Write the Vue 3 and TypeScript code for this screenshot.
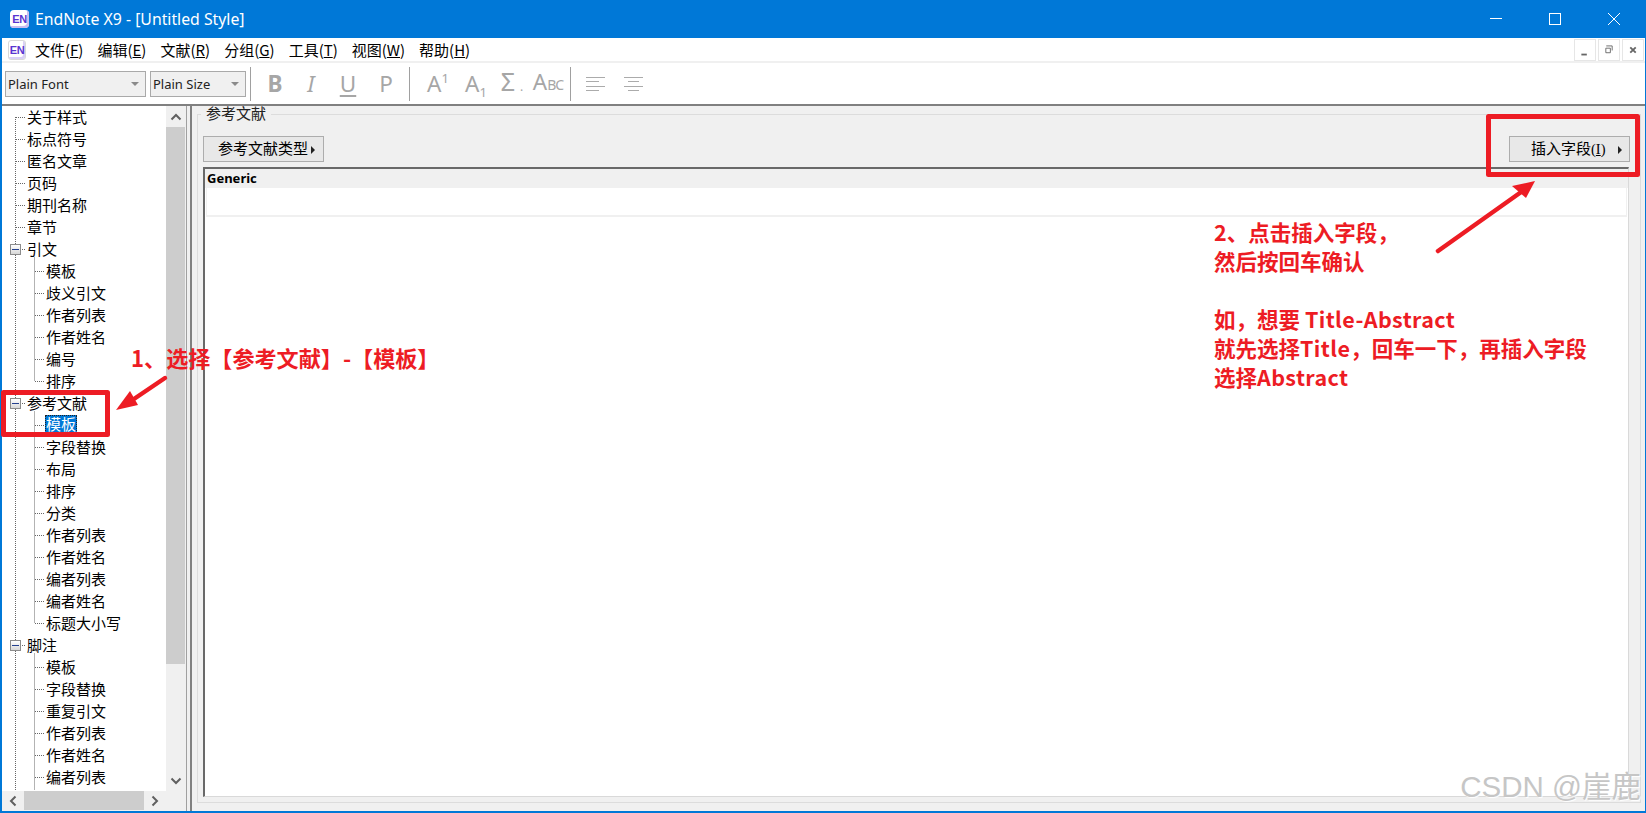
<script setup lang="ts">
interface Row { label: string; level: 0 | 1; box?: boolean; selected?: boolean }

const ROW_H = 22
const groups: Array<string | [string, string[]]> = [
  '关于样式', '标点符号', '匿名文章', '页码', '期刊名称', '章节',
  ['引文', ['模板', '歧义引文', '作者列表', '作者姓名', '编号', '排序']],
  ['参考文献', ['模板', '字段替换', '布局', '排序', '分类', '作者列表', '作者姓名', '编者列表', '编者姓名', '标题大小写']],
  ['脚注', ['模板', '字段替换', '重复引文', '作者列表', '作者姓名', '编者列表']],
]

const rows: Row[] = []
for (const g of groups) {
  if (typeof g === 'string') {
    rows.push({ label: g, level: 0 })
  } else {
    rows.push({ label: g[0], level: 0, box: true })
    g[1].forEach((c, i) => rows.push({ label: c, level: 1, selected: g[0] === '参考文献' && i === 0 }))
  }
}

const cy = (i: number): number => i * ROW_H + 11.5

interface Seg { x1: number; y1: number; x2: number; y2: number }
const segs: Seg[] = []
segs.push({ x1: 15.5, y1: 11, x2: 15.5, y2: 700 })
rows.forEach((r, i) => {
  if (r.level === 0) {
    segs.push({ x1: 16, y1: cy(i), x2: 26, y2: cy(i) })
    if (r.box) {
      let j = i + 1
      while (j < rows.length && rows[j].level === 1) j++
      const endY = j < rows.length ? cy(j - 1) : 700
      segs.push({ x1: 34.5, y1: cy(i) + 8, x2: 34.5, y2: endY })
    }
  } else {
    segs.push({ x1: 35, y1: cy(i), x2: 45, y2: cy(i) })
  }
})

const boxes = rows.map((r, i) => ({ r, i })).filter((o) => o.r.box).map((o) => cy(o.i))

const menus = [
  { t: '文件(', k: 'F' }, { t: '编辑(', k: 'E' }, { t: '文献(', k: 'R' }, { t: '分组(', k: 'G' },
  { t: '工具(', k: 'T' }, { t: '视图(', k: 'W' }, { t: '帮助(', k: 'H' },
]
</script>

<template>
  <div class="page">
    <div class="window">
      <header class="titlebar">
        <span class="logo"><span class="logo-text">EN</span></span>
        <span class="title">EndNote X9 - [Untitled Style]</span>
        <div class="win-controls">
          <svg width="58" height="38" viewBox="0 0 58 38"><path d="M23 18.5h12" stroke="#fff" fill="none" /></svg>
          <svg width="58" height="38" viewBox="0 0 58 38"><rect x="23.5" y="13.5" width="11" height="11" stroke="#fff" fill="none" /></svg>
          <svg width="58" height="38" viewBox="0 0 58 38"><path d="M23 13l12 12M35 13L23 25" stroke="#fff" fill="none" /></svg>
        </div>
      </header>

      <nav class="menubar">
        <span class="logo small"><span class="logo-text">EN</span></span>
        <span v-for="m in menus" :key="m.k" class="menu">{{ m.t }}<u>{{ m.k }}</u>)</span>
        <div class="mdi">
          <span class="mdi-btn"><svg width="22" height="22" viewBox="0 0 22 22"><path d="M7 15h6v2H7z" fill="#666" /></svg></span>
          <span class="mdi-btn"><svg width="22" height="22" viewBox="0 0 22 22"><path d="M8 6.5h6.5v5M7.5 9h5v5h-5z" stroke="#666" fill="none" /></svg></span>
          <span class="mdi-btn"><svg width="22" height="22" viewBox="0 0 22 22"><path d="M8 8l6 6M14 8l-6 6" stroke="#666" stroke-width="2" fill="none" /></svg></span>
        </div>
      </nav>

      <div class="toolbar">
        <div class="select font-select"><span>Plain Font</span><i class="caret"></i></div>
        <div class="select size-select"><span>Plain Size</span><i class="caret"></i></div>
        <span class="sep"></span>
        <span class="tool b">B</span>
        <span class="tool i">I</span>
        <span class="tool u">U</span>
        <span class="tool p">P</span>
        <span class="sep"></span>
        <span class="tool a1">A<sup>1</sup></span>
        <span class="tool a2">A<sub>1</sub></span>
        <span class="tool sig">Σ<small>.</small></span>
        <span class="tool abc">A<small>BC</small></span>
        <span class="sep"></span>
        <svg class="align" width="19" height="16" viewBox="0 0 19 16"><path d="M0 1.5h19M0 5.5h13M0 10.5h19M0 14.5h13" stroke="#ababab" fill="none" /></svg>
        <svg class="align a-center" width="19" height="16" viewBox="0 0 19 16"><path d="M0 1.5h19M4 5.5h11M0 10.5h19M4 14.5h11" stroke="#ababab" fill="none" /></svg>
      </div>

      <div class="body">
        <aside class="left">
          <div class="left-top">
            <div class="tree">
              <svg class="tree-lines" width="164" height="684" viewBox="0 0 164 684">
                <line v-for="(s, n) in segs" :key="n" :x1="s.x1" :y1="s.y1" :x2="s.x2" :y2="s.y2" stroke="#666" stroke-dasharray="1 1" />
              </svg>
              <div v-for="(b, n) in boxes" :key="n" class="box" :style="{ top: b - 5.5 + 'px' }"><i></i></div>
              <div v-for="(r, n) in rows" :key="n" class="row" :class="'lv' + r.level">
                <span :class="{ sel: r.selected }">{{ r.label }}</span>
              </div>
            </div>
            <div class="vscroll">
              <span class="sb-btn"><svg width="12" height="8" viewBox="0 0 12 8"><path d="M1.5 6.5L6 2l4.5 4.5" stroke="#606060" stroke-width="2" fill="none" /></svg></span>
              <span class="v-thumb"></span>
              <span class="v-track"></span>
              <span class="sb-btn"><svg width="12" height="8" viewBox="0 0 12 8"><path d="M1.5 1.5L6 6l4.5-4.5" stroke="#606060" stroke-width="2" fill="none" /></svg></span>
            </div>
          </div>
          <div class="hscroll">
            <span class="h-btn"><svg width="8" height="12" viewBox="0 0 8 12"><path d="M6.5 1.5L2 6l4.5 4.5" stroke="#606060" stroke-width="2" fill="none" /></svg></span>
            <span class="h-thumb"></span>
            <span class="h-btn"><svg width="8" height="12" viewBox="0 0 8 12"><path d="M1.5 1.5L6 6l-4.5 4.5" stroke="#606060" stroke-width="2" fill="none" /></svg></span>
          </div>
        </aside>

        <div class="splitter"></div>

        <main class="pane">
          <section class="group">
            <div class="legend">参考文献</div>
            <div class="buttons">
              <div class="btn type-btn"><span>参考文献类型</span><i class="tri"></i></div>
              <div class="btn insert-btn"><span>插入字段<em>(<u>I</u>)</em></span><i class="tri"></i></div>
            </div>
            <div class="editor">
              <div class="generic">Generic</div>
              <div class="field"></div>
            </div>
          </section>
        </main>
      </div>
    </div>

    <svg class="marks" width="1646" height="813" viewBox="0 0 1646 813">
      <g fill="none" stroke="#ed1c24" stroke-width="5" stroke-linejoin="round">
        <rect x="3.5" y="392.5" width="104" height="42" />
        <rect x="1488.5" y="116.5" width="149" height="58" />
      </g>
      <g stroke="#ed1c24" stroke-width="4.5" stroke-linecap="round" fill="none">
        <path d="M165 378L128 403" />
        <path d="M1438 251L1524 190" />
      </g>
      <g fill="#ed1c24">
        <path d="M116 410L130 391L138 405Z" />
        <path d="M1535 181L1512 186L1526 198Z" />
      </g>
    </svg>

    <div class="note n1">1、选择【参考文献】-【模板】</div>
    <div class="note n2">
      <div>2、点击插入字段，</div>
      <div>然后按回车确认</div>
      <div class="gap">如，想要 <span class="latin">Title-Abstract</span></div>
      <div>就先选择<span class="latin">Title</span>，回车一下，再插入字段</div>
      <div>选择<span class="latin">Abstract</span></div>
    </div>
    <div class="watermark">CSDN @崖鹿</div>
  </div>
</template>

<style>
html, body { margin: 0; padding: 0; background: #fff; }
</style>

<style scoped>
.page {
  position: relative;
  width: 1646px;
  height: 813px;
  overflow: hidden;
  font-family: "Noto Sans CJK SC", "Noto Sans", sans-serif;
  color: #000;
}
.window {
  box-sizing: border-box;
  width: 100%;
  height: 100%;
  border: 1px solid #0078d7;
  border-width: 0 1px 2px 2px;
  display: flex;
  flex-direction: column;
  background: #fff;
}
.titlebar {
  height: 38px;
  flex: none;
  background: #0078d7;
  color: #fff;
  display: flex;
  align-items: center;
  padding-left: 8px;
}
.logo {
  width: 19px;
  height: 18px;
  background: #fff;
  border-radius: 4px;
  box-shadow: inset -2px -2px 0 #c9bdf0;
  display: flex;
  align-items: center;
  justify-content: center;
}
.logo-text {
  font: 700 11px "Liberation Sans", sans-serif;
  color: #5a35d0;
  letter-spacing: -0.3px;
}
.title {
  margin-left: 6px;
  font: 15.8px "Noto Sans", sans-serif;
}
.win-controls {
  margin-left: auto;
  display: flex;
  margin-right: 2px;
  gap: 1px;
}
.menubar {
  box-sizing: border-box;
  height: 25px;
  flex: none;
  border-bottom: 2px solid #f0f0f0;
  display: flex;
  align-items: center;
  padding-left: 6px;
  font-size: 15px;
}
.logo.small {
  box-sizing: border-box;
  width: 18px;
  height: 20px;
  border: 1px solid #d8d8d8;
  border-radius: 3px;
  margin-right: 9px;
  box-shadow: inset -2px -2px 0 #d9d0f5;
}
.menu {
  margin-right: 14px;
  white-space: nowrap;
}
.mdi {
  margin-left: auto;
  display: flex;
  gap: 2px;
  margin-right: 1px;
}
.mdi-btn {
  box-sizing: border-box;
  width: 22px;
  height: 22px;
  border: 1px solid #e6e6e6;
  display: flex;
  align-items: center;
  justify-content: center;
}
.toolbar {
  height: 41px;
  flex: none;
  display: flex;
  align-items: center;
  padding-left: 3px;
}
.select {
  box-sizing: border-box;
  height: 26px;
  border: 1px solid #a9a9a9;
  background: #f0f0f0;
  display: flex;
  align-items: center;
  padding-left: 2px;
  font: 13px "Noto Sans", sans-serif;
  color: #222;
  position: relative;
}
.font-select { width: 141px; margin-right: 4px; }
.size-select { width: 96px; }
.caret {
  position: absolute;
  right: 6px;
  top: 10px;
  border: 4px solid transparent;
  border-top: 4px solid #8a8a8a;
  border-bottom: 0;
}
.sep {
  width: 1px;
  height: 34px;
  background: #a0a0a0;
  margin-left: 4px;
}
.tool {
  color: #a6a6a6;
  font-family: "Noto Sans", sans-serif;
  font-size: 22.5px;
  text-align: center;
  line-height: 30px;
  white-space: nowrap;
}
.tool.b { width: 40px; margin-left: 4px; font-weight: 700; }
.tool.i { width: 32px; font-style: italic; }
.tool.u { width: 42px; text-decoration: underline 2px; text-underline-offset: 3px; }
.tool.p { width: 34px; margin-right: 2px; }
.tool.a1 { width: 42px; margin-left: 7px; }
.tool.a2 { width: 34px; }
.tool.sig { width: 37px; font-size: 25px; }
.tool.abc { width: 36px; }
.tool sup { font-size: 13px; line-height: 0; vertical-align: 9px; }
.tool sub { font-size: 13px; line-height: 0; vertical-align: -5px; }
.tool small { font-size: 14px; letter-spacing: -1px; }
.tool.sig small { margin-left: 5px; font-size: 12px; }
.align { margin-left: 15px; }
.a-center { margin-left: 19px; }

.body {
  flex: 1;
  min-height: 0;
  display: flex;
  border-top: 2px solid #808080;
  background: #f0f0f0;
}
.left {
  width: 184px;
  flex: none;
  display: flex;
  flex-direction: column;
}
.left-top {
  flex: 1;
  min-height: 0;
  display: flex;
}
.tree {
  width: 164px;
  flex: none;
  background: #fff;
  position: relative;
  overflow: hidden;
}
.tree-lines {
  position: absolute;
  left: -2px;
  top: 0;
}
.box {
  position: absolute;
  left: 8px;
  box-sizing: border-box;
  width: 11px;
  height: 11px;
  border: 1px solid #8c8c8c;
  background: linear-gradient(#fff, #d8d8d8);
  display: flex;
  align-items: center;
  justify-content: center;
}
.box i {
  width: 7px;
  height: 1px;
  background: #24408e;
}
.row {
  position: relative;
  height: 22px;
  font-size: 15px;
  line-height: 22px;
  white-space: nowrap;
}
.lv0 { padding-left: 25px; }
.lv1 { padding-left: 44px; }
.sel {
  display: inline-block;
  height: 18px;
  line-height: 18px;
  padding: 0 1px;
  margin-left: -1px;
  background: #0078d7;
  color: #fff;
  outline: 1px dotted #222;
  outline-offset: -1px;
  vertical-align: 1px;
}
.vscroll {
  width: 19px;
  flex: none;
  background: #f0f0f0;
  display: flex;
  flex-direction: column;
}
.sb-btn {
  height: 21px;
  flex: none;
  display: flex;
  align-items: center;
  justify-content: center;
}
.v-thumb { height: 537px; flex: none; background: #cdcdcd; }
.v-track { flex: 1; }
.hscroll {
  height: 20px;
  flex: none;
  width: 164px;
  display: flex;
  align-items: center;
}
.h-btn {
  width: 22px;
  flex: none;
  display: flex;
  justify-content: center;
}
.h-thumb { flex: 1; height: 19px; align-self: flex-start; background: #cdcdcd; }
.splitter {
  box-sizing: border-box;
  width: 4px;
  flex: none;
  border-left: 1px solid #a0a0a0;
}
.pane {
  flex: 1;
  min-width: 0;
  box-sizing: border-box;
  border-left: 2px solid #808080;
  padding: 8px 4px 8px 5px;
  display: flex;
}
.group {
  flex: 1;
  min-width: 0;
  box-sizing: border-box;
  border: 1px solid #dcdcdc;
  padding: 0 10px 5px 5px;
  display: flex;
  flex-direction: column;
}
.legend {
  align-self: flex-start;
  margin: -12px 0 0 -2px;
  padding: 0 5px;
  height: 20px;
  line-height: 20px;
  background: linear-gradient(transparent 50%, #f0f0f0 50%);
  font-size: 15px;
  color: #222;
}
.buttons {
  margin-top: 13px;
  margin-bottom: 5px;
  display: flex;
  justify-content: space-between;
}
.btn {
  box-sizing: border-box;
  height: 26px;
  width: 121px;
  padding-bottom: 3px;
  border: 1px solid #adadad;
  background: #e8e8e8;
  display: flex;
  align-items: center;
  font-size: 15px;
  position: relative;
}
.type-btn span { margin-left: 14px; }
.insert-btn span { margin-left: 21px; }
.insert-btn em { font: 14.5px "Liberation Serif", serif; }
.tri {
  position: absolute;
  top: 9px;
  right: 7px;
  border: 4px solid transparent;
  border-left: 4px solid #222;
  border-right: 0;
}
.type-btn .tri { right: 8px; }
.editor {
  flex: 1;
  min-height: 0;
  box-sizing: border-box;
  border-top: 2px solid #696969;
  border-left: 2px solid #696969;
  border-right: 1px solid #d9d9d9;
  border-bottom: 1px solid #d9d9d9;
  background: #fff;
  margin-right: 1px;
}
.generic {
  height: 19px;
  padding-left: 2px;
  background: #f0f0f0;
  font: 700 13px/19px "Noto Sans", sans-serif;
}
.field {
  height: 27px;
  margin-left: 1px;
  margin-right: 1px;
  background: #fff;
  border-left: 1px solid #f0f0f0;
  border-right: 1px solid #f0f0f0;
  border-bottom: 2px solid #f0f0f0;
}
.marks {
  position: absolute;
  left: 0;
  top: 0;
  pointer-events: none;
}
.note {
  position: absolute;
  color: #ed1c24;
  font-weight: 700;
  font-size: 21.5px;
  line-height: 29px;
  white-space: nowrap;
}
.n1 { left: 131px; top: 343px; font-size: 22.1px; }
.n2 { left: 1214px; top: 217px; }
.latin { letter-spacing: 0.4px; }
.gap { margin-top: 29px; }
.watermark {
  position: absolute;
  right: 5px;
  top: 763px;
  font: 29.5px "Liberation Sans", "Noto Sans CJK SC", sans-serif;
  color: #c6c6c6;
  text-shadow: 1px 1px 1px #fff;
  white-space: nowrap;
}
</style>
